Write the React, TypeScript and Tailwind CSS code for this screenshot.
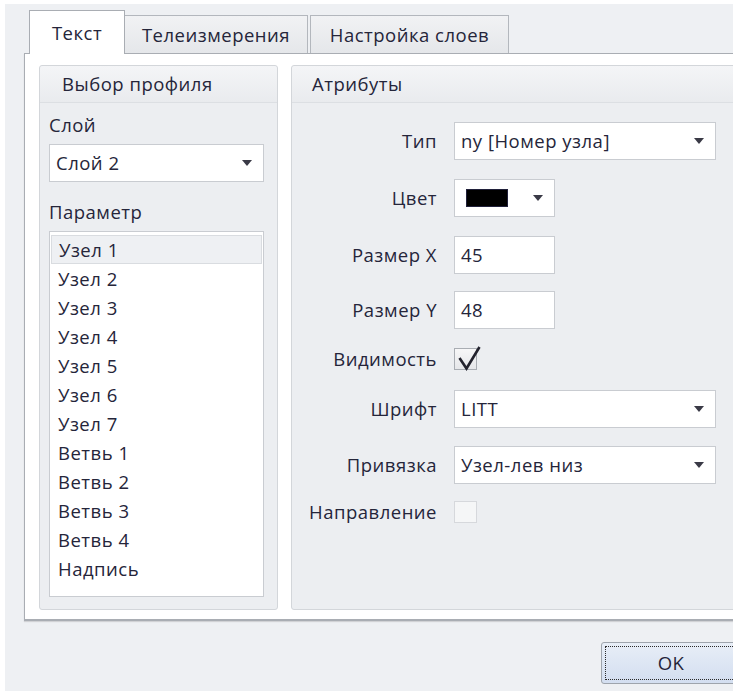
import React from 'react';

const ink = 'text-[#25253a]';

function Arrow() {
  return (
    <svg width="10" height="6" viewBox="0 0 10 6" className="shrink-0">
      <path d="M0 0h10L5 6z" fill="#3a3a46" />
    </svg>
  );
}

function Combo({ value, width }: { value: string; width: string }) {
  return (
    <div className={`${width} h-[38px] bg-white border border-[#c9ccd1] flex items-center justify-between pl-[6px] pr-[11px]`}>
      <span className={ink}>{value}</span>
      <Arrow />
    </div>
  );
}

function TextBox({ value }: { value: string }) {
  return (
    <div className="w-[101px] h-[38px] bg-white border border-[#c9ccd1] flex items-center pl-[6px]">
      <span className={ink}>{value}</span>
    </div>
  );
}

function ColorPicker() {
  return (
    <div className="w-[101px] h-[38px] bg-white border border-[#c9ccd1] flex items-center justify-between pl-[11px] pr-[11px]">
      <div className="w-[42px] h-[18px] bg-black border border-[#20203a]" />
      <Arrow />
    </div>
  );
}

function CheckBox({ checked, disabled }: { checked?: boolean; disabled?: boolean }) {
  return (
    <div
      className={`relative w-[23px] h-[22px] border ${
        disabled ? 'border-[#d6d8dc] bg-[#f5f6f7]' : 'border-[#a9adb3] bg-gradient-to-b from-[#f7f7f8] to-[#e6e7ea]'
      }`}
    >
      {checked && (
        <svg width="26" height="28" viewBox="0 0 26 28" className="absolute left-[2px] top-[-5px]">
          <path d="M2.5 14 L9.5 24.5 L22.5 3" fill="none" stroke="#23232e" strokeWidth="2.6" strokeLinejoin="miter" />
        </svg>
      )}
    </div>
  );
}

function GroupHeader({ title, pad }: { title: string; pad: string }) {
  return (
    <div className={`h-[37px] border-b border-[#dcdfe3] bg-gradient-to-b from-[#f4f5f7] to-[#e9ebee] flex items-center ${pad} rounded-t-[3px]`}>
      <span className={ink}>{title}</span>
    </div>
  );
}

const items = [
  'Узел 1', 'Узел 2', 'Узел 3', 'Узел 4', 'Узел 5', 'Узел 6', 'Узел 7',
  'Ветвь 1', 'Ветвь 2', 'Ветвь 3', 'Ветвь 4', 'Надпись',
];

// атрибуты текста: подпись, отступ сверху, высота строки, элемент управления
const rows: { label: string; mt: string; h: string; control: React.ReactNode }[] = [
  { label: 'Тип', mt: 'mt-0', h: 'h-[38px]', control: <Combo value="ny [Номер узла]" width="w-[262px]" /> },
  { label: 'Цвет', mt: 'mt-[19px]', h: 'h-[38px]', control: <ColorPicker /> },
  { label: 'Размер X', mt: 'mt-[19px]', h: 'h-[38px]', control: <TextBox value="45" /> },
  { label: 'Размер Y', mt: 'mt-[17px]', h: 'h-[38px]', control: <TextBox value="48" /> },
  { label: 'Видимость', mt: 'mt-[18px]', h: 'h-[24px]', control: <CheckBox checked /> },
  { label: 'Шрифт', mt: 'mt-[19px]', h: 'h-[38px]', control: <Combo value="LITT" width="w-[262px]" /> },
  { label: 'Привязка', mt: 'mt-[18px]', h: 'h-[38px]', control: <Combo value="Узел-лев низ" width="w-[262px]" /> },
  { label: 'Направление', mt: 'mt-[17px]', h: 'h-[22px]', control: <CheckBox disabled /> },
];

export default function App() {
  return (
    <div className="w-[733px] h-[691px] overflow-hidden bg-white pl-[5px] pt-[4px] font-['Open_Sans','Noto_Sans',sans-serif] text-[18.5px] tracking-[0.5px]">
      <div className="h-full bg-[#eef0f3]">
        {/* Tabs */}
        <div className="ml-[19px] pt-[7px]">
          <div className="flex items-end pl-[5px] h-[42px]">
            <div className="relative z-10 -mb-px w-[96px] h-[44px] bg-white border border-b-0 border-[#a9adb3] flex items-center justify-center">
              <span className={ink}>Текст</span>
            </div>
            <div className="-ml-px w-[184px] h-[38px] bg-gradient-to-b from-[#f1f2f4] to-[#e5e7ea] border border-b-0 border-[#b3b7bd] flex items-center justify-center">
              <span className={ink}>Телеизмерения</span>
            </div>
            <div className="ml-[2px] w-[199px] h-[38px] bg-gradient-to-b from-[#f1f2f4] to-[#e5e7ea] border border-b-0 border-[#b3b7bd] flex items-center justify-center">
              <span className={ink}>Настройка слоев</span>
            </div>
          </div>

          {/* Tab page */}
          <div className="w-[740px] h-[568px] bg-white border border-b-2 border-[#a9adb3] shadow-[0_1px_1px_rgba(0,0,0,0.12)] pl-[14px] pt-[11px] flex gap-[13px]">
            {/* Выбор профиля */}
            <div className="w-[239px] h-[545px] bg-[#eceef1] border border-[#d3d6da] rounded-[3px] flex flex-col">
              <GroupHeader title="Выбор профиля" pad="pl-[22px]" />
              <div className="pl-[9px]">
                <div className={`mt-[11px] leading-[22px] ${ink}`}>Слой</div>
                <div className="mt-[8px]">
                  <Combo value="Слой 2" width="w-[215px]" />
                </div>
                <div className={`mt-[19px] leading-[22px] ${ink}`}>Параметр</div>
                <div className="mt-[8px] w-[215px] h-[366px] bg-white border border-[#c9ccd1] pt-[3px] px-px">
                  {items.map((item, i) => (
                    <div
                      key={item}
                      className={`h-[29px] flex items-center pl-[7px] ${ink} ${
                        i === 0 ? 'bg-[#eef0f3] border border-[#d9dce0]' : ''
                      }`}
                    >
                      {item}
                    </div>
                  ))}
                </div>
              </div>
            </div>

            {/* Атрибуты */}
            <div className="w-[460px] h-[545px] bg-[#eceef1] border border-[#d3d6da] rounded-[3px] flex flex-col">
              <GroupHeader title="Атрибуты" pad="pl-[20px]" />
              <div className="pt-[19px] flex flex-col">
                {rows.map((r) => (
                  <div key={r.label} className={`${r.mt} ${r.h} flex items-center`}>
                    <div className={`w-[145px] text-right ${ink}`}>{r.label}</div>
                    <div className="ml-[17px]">{r.control}</div>
                  </div>
                ))}
              </div>
            </div>
          </div>
        </div>

        {/* Buttons */}
        <div className="mt-[21px] ml-[596px]">
          <div className="w-[140px] h-[42px] rounded-[3px] border border-[#9ea4ac] bg-gradient-to-b from-[#e8eef7] to-[#d3def0] p-[3px]">
            <div className="h-full border border-dotted border-[#2a2a2a] flex items-center justify-center">
              <span className={ink}>OK</span>
            </div>
          </div>
        </div>
      </div>
    </div>
  );
}
